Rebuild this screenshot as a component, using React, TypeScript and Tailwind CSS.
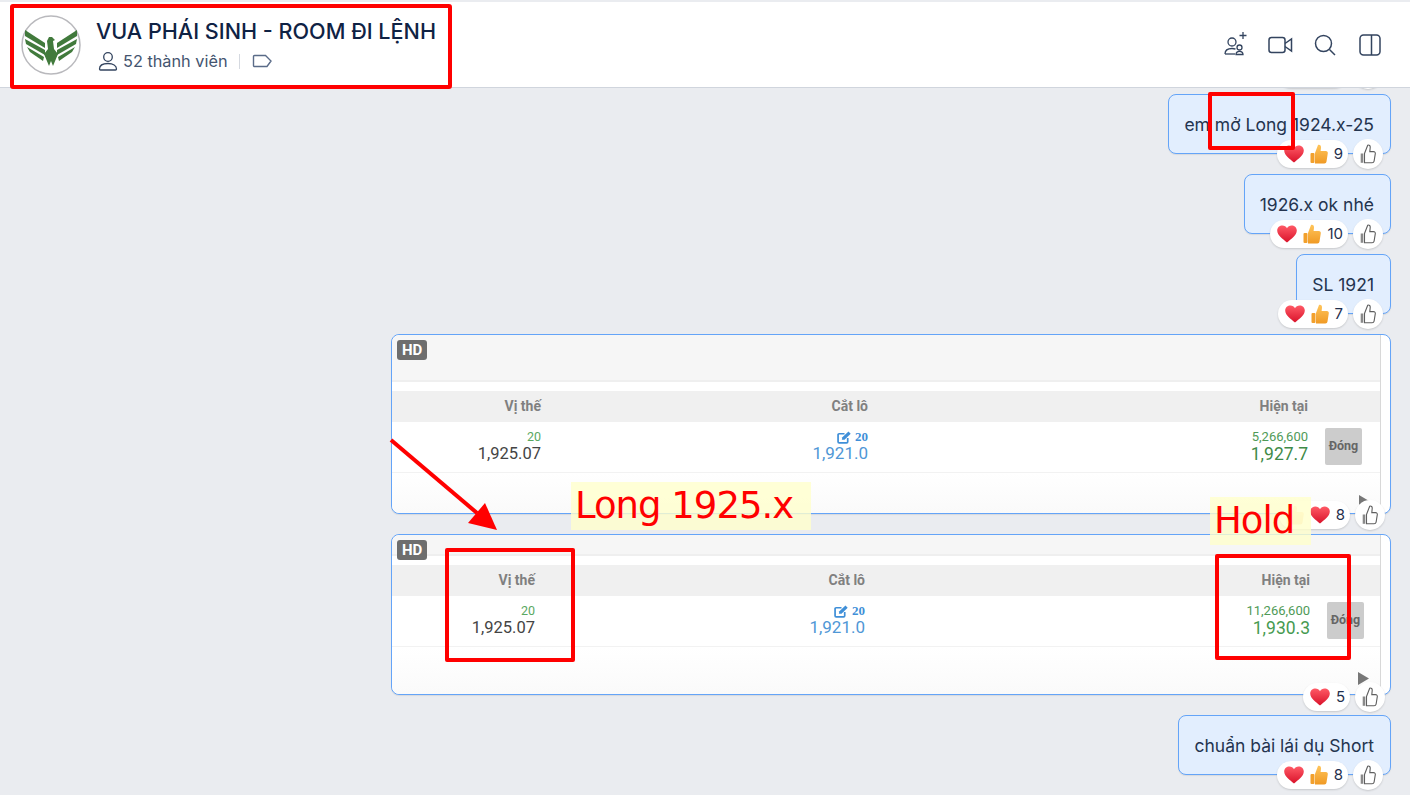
import React from "react";

function Heart() {
  return (
    <svg width="20" height="20" viewBox="0 0 20 20" className="shrink-0">
      <defs>
        <linearGradient id="heartFill" x1="0" y1="0" x2="0" y2="1">
          <stop offset="0" stopColor="#ff5a66" />
          <stop offset="1" stopColor="#d9122a" />
        </linearGradient>
      </defs>
      <path
        d="M10 18.500C6 15 .2 11.600.2 6.500.2 3.300 2.800 1.400 5.400 1.400c2 0 3.600 1 4.600 2.800 1-1.800 2.600-2.800 4.600-2.800 2.600 0 5.200 1.900 5.200 5.100 0 5.100-5.800 8.500-9.800 12z"
        fill="url(#heartFill)"
      />
    </svg>
  );
}

function Thumb({ faded }: { faded?: boolean }) {
  return (
    <svg width="18" height="20" viewBox="0 0 18 20" className={faded ? "shrink-0 opacity-40" : "shrink-0"}>
      <defs>
        <linearGradient id="thumbFill" x1="0" y1="0" x2="0" y2="1">
          <stop offset="0" stopColor="#ffc55c" />
          <stop offset="1" stopColor="#f09a24" />
        </linearGradient>
      </defs>
      <path
        d="M5 9 8 1c1.900-.7 3.200.7 3 2.700L10.600 7h5.200c1.500 0 2.200 1.200 2 2.300l-1.300 8.200c-.2 1.200-1 1.900-2.200 1.900H5z"
        fill="url(#thumbFill)"
      />
      <rect x="0.500" y="9" width="4" height="10" rx="1" fill="#f2a02c" />
    </svg>
  );
}

function LikeOutline() {
  return (
    <svg width="16" height="20" viewBox="0 0 16 20" fill="none" stroke="#5f5f5f" strokeWidth="1.100">
      <path d="M4.500 9.500 7.700 1.200c1.500-.5 2.700.6 2.500 2.300L9.800 7.600h3.700c1.300 0 2 1 1.800 2.100l-1.200 7.400c-.2 1-.9 1.700-2 1.700H4.500z" />
      <rect x="0.700" y="9.500" width="2.600" height="9.300" fill="#8a8a8a" stroke="none" />
    </svg>
  );
}

function Reactions({ kind, count, place }: { kind: "both" | "swap" | "heart"; count: number; place: string }) {
  return (
    <div className={`absolute flex items-center gap-[5px] ${place}`}>
      <div className="flex h-[28px] items-center gap-[6px] rounded-full bg-white pl-[7px] pr-[5px] shadow-[0_1px_2px_rgba(0,0,0,0.15)]">
        {kind === "both" && <Heart />}
        {kind === "both" && <Thumb />}
        {kind === "swap" && <Thumb faded />}
        {kind !== "both" && <Heart />}
        <span className="text-[15px] text-[#1f2f4d]">{count}</span>
      </div>
      <div className="flex h-[30px] w-[30px] items-center justify-center rounded-full bg-white shadow-[0_1px_2px_rgba(0,0,0,0.15)]">
        <LikeOutline />
      </div>
    </div>
  );
}

function TextBubble({ text, count }: { text: string; count: number }) {
  return (
    <div className="relative flex h-[60px] items-center rounded-[8px] border border-[#64a4f8] bg-[#e2eefe] pl-[15px] pr-[16px] pt-[2px] text-[17.500px] text-[#24344f] shadow-[0_1px_1px_rgba(0,0,0,0.08)]">
      {text}
      <Reactions kind="both" count={count} place="right-[7px] -bottom-[16px]" />
    </div>
  );
}

type Position = {
  h: string;
  topH: string;
  col1: string;
  col2: string;
  col3: string;
  stop: string;
  current: string;
  currentColor: string;
  kind: "swap" | "heart";
  count: number;
  arrow: string;
  place: string;
};

function PositionBubble({ p }: { p: Position }) {
  return (
    <div className={`relative w-[1000px] rounded-[8px] border border-[#64a4f8] bg-white pr-[9px] shadow-[0_1px_1px_rgba(0,0,0,0.08)] ${p.h}`}>
      <div className="flex h-full flex-col overflow-hidden rounded-l-[8px] border-r border-[#d8d8d8] font-['Roboto',sans-serif]">
        <div className={`relative border-b-2 border-[#efefef] bg-[#f6f6f6] ${p.topH}`}>
          <span className="absolute left-[5px] top-[5px] rounded-[3px] bg-[#6e6e6e] px-[5px] text-[15px] leading-[20px] font-bold text-white">HD</span>
        </div>
        <div className="h-[9px] bg-white" />
        <div className="flex h-[31px] items-center bg-[#f0f0f0] text-[14px] font-bold text-[#808080]">
          <div className={`${p.col1} text-right`}>Vị thế</div>
          <div className={`${p.col2} text-right`}>Cắt lô</div>
          <div className={`${p.col3} text-right`}>Hiện tại</div>
        </div>
        <div className="flex h-[51px] items-center border-b border-[#f2f2f2] bg-white pb-[1px]">
          <div className={`${p.col1} text-right`}>
            <div className="text-[12.500px] leading-[14px] text-[#5aa862]">20</div>
            <div className="text-[16.500px] leading-[20px] text-[#444]">1,925.07</div>
          </div>
          <div className={`${p.col2} text-right`}>
            <div className="flex items-center justify-end gap-[3px] font-['Liberation_Serif',serif] text-[13px] leading-[14px] font-bold text-[#3f8fd8]">
              <svg width="15" height="13" viewBox="0 0 14 12" fill="none">
                <path d="M10 6.500V10a1 1 0 0 1-1 1H2a1 1 0 0 1-1-1V3.500a1 1 0 0 1 1-1h5" stroke="#3f8fd8" strokeWidth="1.600" />
                <path d="M4.500 8.200 5 5.700 10.700.5l2.100 2L7 8z" fill="#3f8fd8" />
              </svg>
              20
            </div>
            <div className="text-[17px] leading-[19px] text-[#4f97d6]">1,921.0</div>
          </div>
          <div className={`${p.col3} text-right`}>
            <div className="text-[13px] leading-[14px] text-[#4f9a57]">{p.stop}</div>
            <div className={`text-[17.500px] leading-[20px] ${p.currentColor}`}>{p.current}</div>
          </div>
          <div className="ml-[17px] flex h-[37px] w-[37px] items-center justify-center rounded-[2px] bg-[#cccccc] text-[12.500px] font-bold text-[#666]">
            Đóng
          </div>
        </div>
        <div className="relative flex-1 bg-gradient-to-b from-white to-[#fafafa]">
          <svg width="12" height="13" viewBox="0 0 12 13" className={`absolute ${p.arrow}`}>
            <path d="M1 0l11 6.500L1 13z" fill="#777" />
          </svg>
        </div>
      </div>
      <Reactions kind={p.kind} count={p.count} place={p.place} />
    </div>
  );
}

const first: Position = {
  h: "h-[180px]",
  topH: "h-[47px]",
  col1: "w-[149px]",
  col2: "w-[327px]",
  col3: "w-[440px]",
  stop: "5,266,600",
  current: "1,927.7",
  currentColor: "text-[#3f8a48]",
  kind: "swap",
  count: 8,
  arrow: "right-[10px] bottom-[5px]",
  place: "right-[5px] -bottom-[17px]",
};

const second: Position = {
  h: "h-[161px]",
  topH: "h-[21px]",
  col1: "w-[143px]",
  col2: "w-[330px]",
  col3: "w-[445px]",
  stop: "11,266,600",
  current: "1,930.3",
  currentColor: "text-[#469a50]",
  kind: "heart",
  count: 5,
  arrow: "right-[11px] bottom-[9px]",
  place: "right-[5px] -bottom-[18px]",
};

function GroupLogo() {
  return (
    <svg width="60" height="60" viewBox="0 0 60 60" className="shrink-0">
      <circle cx="30" cy="30" r="29" fill="#fff" stroke="#b9b9bd" strokeWidth="1.500" />
      <g fill="#417a3c">
        <path d="M4 15 24 28v5L4 21z" />
        <path d="M4 24 24 35v5L5 29z" />
        <path d="M6 32 23 42l-1 4L9 37z" />
        <path d="M56 15 36 28v5l20-12z" />
        <path d="M56 24 36 35v5l19-11z" />
        <path d="M54 32 37 42l1 4 13-9z" />
        <path d="M26 26l2-4h3l3 3-2 1 1 8 4 5-5 12-2-5-2 5-5-12 4-5z" />
      </g>
    </svg>
  );
}

function HeaderIcons() {
  return (
    <div className="flex items-center gap-[20px] pr-[29px] text-[#33445f]">
      <svg width="25" height="25" viewBox="0 0 25 25" fill="none" stroke="currentColor" strokeWidth="1.300">
        <circle cx="9" cy="10" r="4" />
        <path d="M2 22c0-3.500 3-5.500 7-5.500 1.500 0 2.500.2 3.500.7" />
        <path d="M2 22h10" />
        <circle cx="16.500" cy="15.500" r="2.500" />
        <path d="M13 22.500c0-2 1.500-3.200 3.500-3.200s3.500 1.200 3.500 3.200z" />
        <path d="M20 0v7M16.500 3.500h7" />
      </svg>
      <svg width="25" height="20" viewBox="0 0 25 20" fill="none" stroke="currentColor" strokeWidth="1.500">
        <rect x="1" y="2.500" width="16" height="15" rx="2.500" />
        <path d="M17 8.500 23.500 4v12L17 11.500" />
      </svg>
      <svg width="24" height="24" viewBox="0 0 24 24" fill="none" stroke="currentColor" strokeWidth="1.500">
        <circle cx="10.500" cy="10.500" r="8" />
        <path d="M16.500 16.500 22 22" />
      </svg>
      <svg width="22" height="22" viewBox="0 0 22 22" fill="none" stroke="currentColor" strokeWidth="1.500" className="ml-[2px]">
        <rect x="1" y="1" width="20" height="20" rx="3.500" />
        <path d="M12.500 1v20" />
      </svg>
    </div>
  );
}

export default function App() {
  return (
    <div className="relative h-[795px] w-full overflow-hidden bg-[#eaecf0] font-['Inter',sans-serif]">
      <header className="relative z-10 mt-[2px] flex h-[86px] items-center justify-between border-b border-[#d0d5dd] bg-white">
        <div className="flex items-center gap-[15px] pl-[21px]">
          <GroupLogo />
          <div>
            <div className="text-[21.600px] leading-[28px] font-medium text-[#0f2244]">VUA PHÁI SINH - ROOM ĐI LỆNH</div>
            <div className="mt-[5px] flex items-center text-[16.300px] leading-[22px] text-[#44546f]">
              <svg width="20" height="20" viewBox="0 0 20 20" fill="none" stroke="#33445f" strokeWidth="1.300" className="ml-[2px] mr-[5px]">
                <circle cx="10" cy="6" r="4.300" />
                <path d="M1.500 18c0-3.500 3.500-5.500 8.500-5.500s8.500 2 8.500 5.500c0 .6-.4 1-1 1h-15c-.6 0-1-.4-1-1z" />
              </svg>
              52 thành viên
              <span className="ml-[11px] mr-[12px] h-[15px] w-px bg-[#d5d9e0]" />
              <svg width="21" height="14" viewBox="0 0 21 14" fill="none" stroke="#5a6b88" strokeWidth="1.400">
                <path d="M2.500 1.500h11l5.500 5.500-4 5.500H2.500a1 1 0 0 1-1-1v-9a1 1 0 0 1 1-1z" />
              </svg>
            </div>
          </div>
        </div>
        <HeaderIcons />
      </header>

      <main className="-mt-[74px] flex flex-col items-end gap-[20px] pr-[19px]">
        <TextBubble text="" count={6} />
        <TextBubble text="em mở Long 1924.x-25" count={9} />
        <TextBubble text="1926.x ok nhé" count={10} />
        <TextBubble text="SL 1921" count={7} />
        <PositionBubble p={first} />
        <PositionBubble p={second} />
        <TextBubble text="chuẩn bài lái dụ Short" count={8} />
      </main>

      {/* markup drawn over the screenshot */}
      <div className="absolute left-[10px] top-[4px] z-20 h-[85px] w-[442px] rounded-[3px] border-[4px] border-[#ff0000]" />
      <div className="absolute left-[1208px] top-[92px] z-20 h-[58px] w-[87px] rounded-[2px] border-[4px] border-[#ff0000]" />
      <div className="absolute left-[445px] top-[548px] z-20 h-[114px] w-[130px] rounded-[2px] border-[4px] border-[#ff0000]" />
      <div className="absolute left-[1215px] top-[554px] z-20 h-[106px] w-[136px] rounded-[2px] border-[4px] border-[#ff0000]" />
      <div className="absolute left-[571px] top-[482px] z-20 flex h-[48px] w-[240px] items-center bg-[#ffffcc]/80 pb-[2px] pl-[4px] font-['DejaVu_Sans',sans-serif] text-[37px] leading-none tracking-[-1px] whitespace-pre text-[#ff0000]">
        Long 1925.x
      </div>
      <div className="absolute left-[1210px] top-[497px] z-20 flex h-[48px] w-[101px] items-center bg-[#ffffcc]/80 pb-[2px] pl-[4px] font-['DejaVu_Sans',sans-serif] text-[37px] leading-none tracking-[-1px] text-[#ff0000]">
        Hold
      </div>
      <svg width="120" height="100" viewBox="0 0 120 100" className="absolute left-[385px] top-[435px] z-20">
        <path d="M6 5 92 78" stroke="#ff0000" strokeWidth="4" />
        <path d="M112 95 83 88 100 68z" fill="#ff0000" />
      </svg>
    </div>
  );
}
